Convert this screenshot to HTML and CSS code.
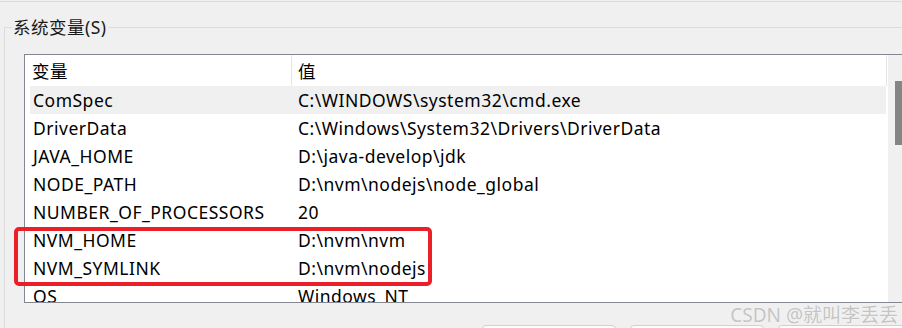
FILE: index.html
```html
<!DOCTYPE html>
<html>
  <head>
    <title>系统变量</title>
    <link rel="stylesheet" href="styles.css">
  </head>
  <body>
    <div class="prev-group"></div>
    <fieldset class="group">
      <legend>系统变量(S)</legend>
      <div class="listbox">
        <div class="list-main">
          <div class="list-head">
            <div class="head-cell name">变量</div>
            <div class="head-cell value">值</div>
          </div>
          <div class="list-body">
            <div class="row selected"><span class="c-name">ComSpec</span><span class="c-value">C:\WINDOWS\system32\cmd.exe</span></div>
            <div class="row"><span class="c-name">DriverData</span><span class="c-value">C:\Windows\System32\Drivers\DriverData</span></div>
            <div class="row"><span class="c-name">JAVA_HOME</span><span class="c-value">D:\java-develop\jdk</span></div>
            <div class="row"><span class="c-name">NODE_PATH</span><span class="c-value">D:\nvm\nodejs\node_global</span></div>
            <div class="row"><span class="c-name">NUMBER_OF_PROCESSORS</span><span class="c-value">20</span></div>
            <div class="row"><span class="c-name">NVM_HOME</span><span class="c-value">D:\nvm\nvm</span></div>
            <div class="row"><span class="c-name">NVM_SYMLINK</span><span class="c-value">D:\nvm\nodejs</span></div>
            <div class="row"><span class="c-name">OS</span><span class="c-value">Windows_NT</span></div>
          </div>
        </div>
        <div class="scrollbar"><div class="thumb"></div></div>
      </div>
      <div class="buttons">
        <button>新建(W)...</button>
        <button>编辑(I)...</button>
        <button>删除(L)</button>
      </div>
    </fieldset>

    <!-- 标注框 -->
    <div class="mark"></div>
    <div class="watermark">CSDN @就叫李丢丢</div>
  </body>
</html>
```

FILE: styles.css
```css
/* 基础 */
* {
  box-sizing: border-box;
  margin: 0;
  padding: 0;
}

body {
  width: 902px;
  height: 328px;
  overflow: hidden;
  position: relative;
  background-color: #f0f0f0;
  font-family: "Noto Sans", "Noto Sans CJK SC", sans-serif;
  font-size: 17.5px;
  letter-spacing: 0.5px;
  color: #000;
}

.prev-group {
  height: 2px;
  border-bottom: 1px solid #dcdcdc;
}

/* 分组框 */
.group {
  width: 960px;
  margin: 15px 0 0 4px;
  padding: 0;
  border: 1px solid #dcdcdc;
}

.group legend {
  margin-left: 7px;
  padding: 0 1px;
  line-height: 20px;
  color: #1a1a1a;
}

/* 列表 */
.listbox {
  display: flex;
  width: 882px;
  height: 249px;
  margin: 17px 0 0 19px;
  border: 1px solid #828790;
  background-color: #fff;
  overflow: hidden;
}

.list-main {
  width: 863px;
}

.list-head {
  display: flex;
  height: 31px;
}

.head-cell {
  display: flex;
  align-items: center;
  border-right: 1px solid #e5e5e5;
}

.head-cell.name {
  width: 267px;
  padding-left: 7px;
}

.head-cell.value {
  width: 595px;
  padding-left: 6px;
}

.list-body {
  padding-left: 5px;
}

.row {
  display: flex;
  align-items: center;
  width: 856px;
  height: 28px;
  white-space: nowrap;
}

.row.selected {
  background-color: #f0f0f0;
}

.c-name {
  width: 265px;
  padding-left: 3px;
}

.c-value {
  padding-left: 3px;
}

.scrollbar {
  width: 17px;
  background-color: #f0f0f0;
  padding: 26px 0 0 7px;
}

.thumb {
  width: 8px;
  height: 64px;
  background-color: #858585;
}

/* 底部按钮 */
.buttons {
  display: flex;
  gap: 14px;
  margin: 22px 0 0 477px;
}

.buttons button {
  width: 134px;
  height: 30px;
  border: 1px solid #d0d0d0;
  border-radius: 4px;
  background-color: #fdfdfd;
  font-family: inherit;
  font-size: 16px;
}

/* 红色标注 */
.mark {
  position: absolute;
  left: 14px;
  top: 227px;
  width: 418px;
  height: 59px;
  border: 4px solid #ea1f28;
  border-radius: 5px;
}

.watermark {
  position: absolute;
  right: 4px;
  top: 303px;
  font-size: 19px;
  line-height: 24px;
  letter-spacing: 0;
  color: #c4c4c4;
  text-shadow: 0 0 1px #fff;
}
```
